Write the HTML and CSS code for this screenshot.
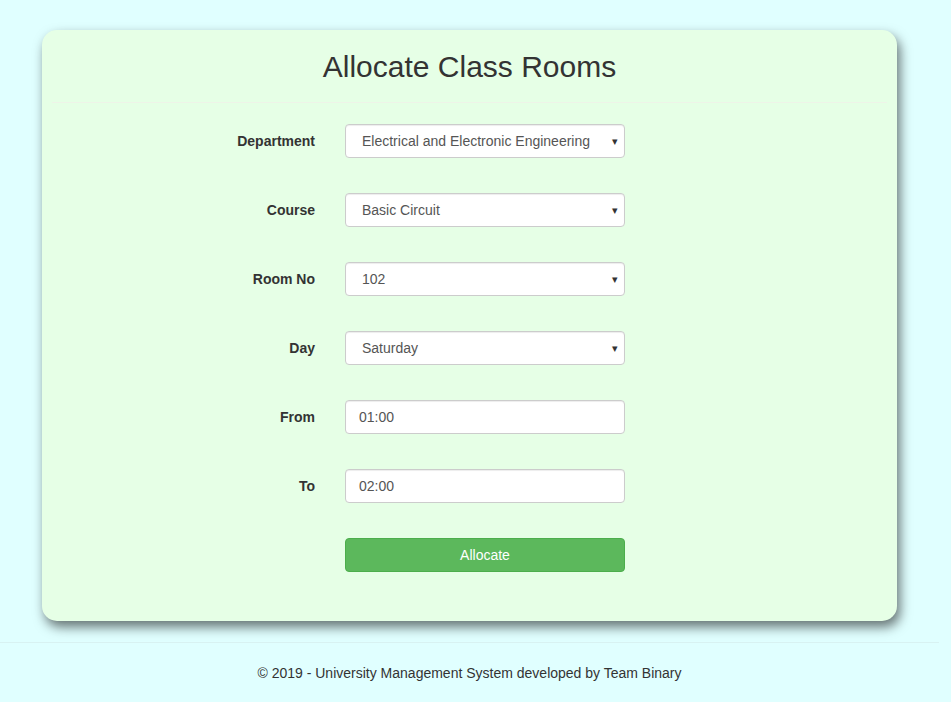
FILE: index.html
```html
<!DOCTYPE html>
<html>
<head>
<meta charset="utf-8">
<title>Allocate Class Rooms</title>
<link rel="stylesheet" href="styles.css">
</head>
<body>
<div class="page">
  <div class="card">
    <h2 class="title">Allocate Class Rooms</h2>
    <hr class="divider">
    <form class="form">
      <label class="lbl">Department</label>
      <div class="ctl select"><span>Electrical and Electronic Engineering</span><span class="caret">▾</span></div>

      <label class="lbl">Course</label>
      <div class="ctl select"><span>Basic Circuit</span><span class="caret">▾</span></div>

      <label class="lbl">Room No</label>
      <div class="ctl select"><span>102</span><span class="caret">▾</span></div>

      <label class="lbl">Day</label>
      <div class="ctl select"><span>Saturday</span><span class="caret">▾</span></div>

      <label class="lbl">From</label>
      <div class="ctl input">01:00</div>

      <label class="lbl">To</label>
      <div class="ctl input">02:00</div>

      <span></span>
      <button type="button" class="btn">Allocate</button>
    </form>
  </div>
  <hr class="foot-line">
  <footer class="footer">© 2019 - University Management System developed by Team Binary</footer>
</div>
</body>
</html>
```

FILE: styles.css
```css
html, body {
  margin: 0;
  padding: 0;
  background: #e0ffff;
  font-family: "Liberation Sans", Arial, Helvetica, sans-serif;
  font-size: 14px;
  color: #333;
  height: 100%;
}
.page {
  width: 939px;
  padding-top: 30px;
  box-sizing: border-box;
}
.card {
  margin: 0 42px;
  background: #e6ffe6;
  border-radius: 15px;
  box-shadow: 3px 6px 12px rgba(0, 0, 0, 0.55);
  padding: 20px 10px 49px;
}
.title {
  margin: 0 0 19px;
  font-size: 30px;
  font-weight: 500;
  line-height: 33px;
  text-align: center;
  color: #333;
}
.divider {
  margin: 0;
  border: 0;
  border-top: 1px solid #eef4e8;
}
.form {
  margin-top: 21px;
  display: grid;
  grid-template-columns: 263px 280px;
  column-gap: 30px;
  row-gap: 35px;
  align-items: center;
}
.lbl {
  text-align: right;
  font-weight: bold;
  color: #333;
  line-height: 20px;
}
.ctl {
  box-sizing: border-box;
  height: 34px;
  background: #fff;
  border: 1px solid #ccc;
  border-radius: 4px;
  box-shadow: inset 0 1px 1px rgba(0, 0, 0, 0.075);
  color: #555;
  display: flex;
  align-items: center;
  line-height: 20px;
}
.select {
  padding: 0 6px 0 16px;
  justify-content: space-between;
}
.input {
  padding: 0 12px 0 13px;
}
.caret {
  font-size: 11px;
  color: #333;
}
.btn {
  height: 34px;
  box-sizing: border-box;
  background: #5cb85c;
  border: 1px solid #4cae4c;
  border-radius: 4px;
  color: #fff;
  font-family: inherit;
  font-size: 14px;
  padding: 0;
}
.foot-line {
  margin: 21px 0 0;
  border: 0;
  border-top: 1px solid #d8f2f2;
}
.footer {
  text-align: center;
  line-height: 20px;
  padding-top: 20px;
  color: #333;
}
```
